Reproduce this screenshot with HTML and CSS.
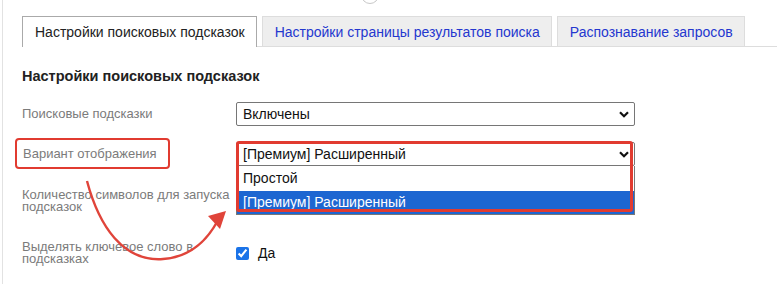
FILE: index.html
```html
<!DOCTYPE html>
<html lang="ru">
<head>
    <meta charset="UTF-8">
    <title>Настройки поисковых подсказок</title>
    <link rel="stylesheet" href="styles.css">
</head>
<body>
<div class="page">
    <span class="top-knob"></span>

    <ul class="tabs">
        <li class="tab active">Настройки поисковых подсказок</li>
        <li class="tab">Настройки страницы результатов поиска</li>
        <li class="tab">Распознавание запросов</li>
    </ul>

    <section class="panel">
        <h3>Настройки поисковых подсказок</h3>

        <div class="form">
            <div class="row">
                <div class="label">Поисковые подсказки</div>
                <div class="select">
                    <span>Включены</span>
                    <svg class="chevron" width="10" height="7" viewBox="0 0 10 7"><path d="M1 1.2 L5 5.2 L9 1.2" fill="none" stroke="#111" stroke-width="2.2"/></svg>
                </div>
            </div>

            <div class="row">
                <div class="label"><span class="mark">Вариант отображения</span></div>
                <div class="select-wrap">
                    <div class="select">
                        <span>[Премиум] Расширенный</span>
                        <svg class="chevron" width="10" height="7" viewBox="0 0 10 7"><path d="M1 1.2 L5 5.2 L9 1.2" fill="none" stroke="#111" stroke-width="2.2"/></svg>
                    </div>
                    <!-- opened list -->
                    <ul class="options">
                        <li>Простой</li>
                        <li class="selected">[Премиум] Расширенный</li>
                    </ul>
                    <div class="highlight"></div>
                </div>
            </div>

            <div class="row row-tall">
                <div class="label">Количество символов для запуска подсказок</div>
            </div>

            <div class="row row-check">
                <div class="label">Выделять ключевое слово в подсказках</div>
                <label class="check"><input type="checkbox" checked> Да</label>
            </div>
        </div>
    </section>

    <svg class="arrow" width="240" height="100" viewBox="0 170 240 100">
        <path d="M84 181 C 96 226, 120 262, 160 259 C 188 257, 204 240, 214 222" fill="none" stroke="#e0443a" stroke-width="2.4"/>
        <polygon points="223,211 205,216 217,229" fill="#e0443a"/>
    </svg>
</div>
</body>
</html>
```

FILE: styles.css
```css
body {
    margin: 0;
    font-family: 'Liberation Sans', Arial, sans-serif;
    color: #222;
    background: #fff;
}
.page {
    position: relative;
    margin-left: 2px;
    border-left: 1px solid #e2e2e2;
    padding-left: 19px;
    min-height: 284px;
    box-sizing: border-box;
}
.top-knob {
    position: absolute;
    left: 358px;
    top: -14px;
    width: 16px;
    height: 16px;
    border: 1px solid #c8c8c8;
    border-radius: 50%;
}

/* tabs */
.tabs {
    display: flex;
    gap: 5px;
    list-style: none;
    margin: 0;
    padding: 16px 0 0 0;
    border-bottom: 1px solid #ddd;
}
.tab {
    font-size: 14px;
    line-height: 16px;
    padding: 7px 11px 6px 12px;
    background: #eee;
    border: 1px solid #ddd;
    border-bottom: none;
    color: #2437cf;
}
.tab.active {
    background: #fff;
    border-color: #aaa;
    color: #222;
    margin-bottom: -1px;
    padding-bottom: 7px;
}

/* panel */
.panel h3 {
    font-size: 14.5px;
    line-height: 18px;
    margin: 20px 0 17px;
}
.form {
    display: flex;
    flex-direction: column;
    gap: 16px;
}
.row {
    display: flex;
    align-items: center;
    min-height: 24px;
}
.row-tall {
    min-height: 38px;
}
.row-check {
    min-height: 34px;
}
.label {
    width: 214px;
    flex: none;
    font-size: 13px;
    line-height: 12.5px;
    color: #7b7b7b;
    padding-right: 2px;
    box-sizing: border-box;
}
.mark {
    display: inline-block;
    margin: -10px 0 -10px -7px;
    padding: 8px 11px 7px 6px;
    border: 2.5px solid #e13b30;
    border-radius: 4px;
}

/* select */
.select-wrap {
    position: relative;
}
.select {
    width: 399px;
    height: 24px;
    box-sizing: border-box;
    border: 1px solid #767676;
    border-radius: 2px;
    display: flex;
    align-items: center;
    justify-content: space-between;
    padding: 0 5px 0 6px;
    font-size: 14px;
    color: #111;
}
.chevron {
    flex: none;
}
.options {
    position: absolute;
    left: 0;
    top: 24px;
    width: 399px;
    box-sizing: border-box;
    margin: 0;
    padding: 0;
    list-style: none;
    background: #fff;
    border: 1px solid #777;
    border-top: none;
    z-index: 2;
}
.options li {
    font-size: 14px;
    height: 25px;
    line-height: 25px;
    padding-left: 6px;
    color: #111;
}
.options li.selected {
    background: #1d66d1;
    color: #fff;
    height: 23px;
    line-height: 23px;
}
.highlight {
    position: absolute;
    left: 0;
    top: -1px;
    width: 397px;
    height: 71px;
    box-sizing: border-box;
    border: 3px solid #e13b30;
    border-radius: 3px;
    z-index: 3;
}

/* checkbox */
.check {
    font-size: 14px;
    color: #111;
    display: flex;
    align-items: center;
    gap: 9px;
}
.check input {
    margin: 0;
    width: 13px;
    height: 13px;
    accent-color: #1a73e8;
}

.arrow {
    position: absolute;
    left: 0;
    top: 170px;
    z-index: 4;
    pointer-events: none;
}
```
